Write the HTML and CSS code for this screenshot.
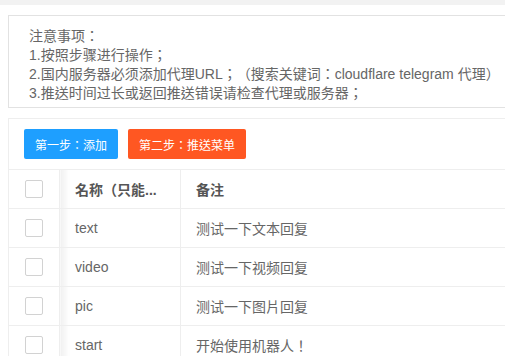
FILE: index.html
```html
<!DOCTYPE html>
<html lang="zh-CN">
<head>
    <meta charset="UTF-8">
    <meta name="viewport" content="width=device-width, initial-scale=1.0">
    <title>菜单管理</title>
    <link rel="stylesheet" href="styles.css">
</head>
<body>
    <div class="topbar"></div>

    <div class="notice">
        <div>注意事项：</div>
        <div>1.按照步骤进行操作；</div>
        <div>2.国内服务器必须添加代理URL；（搜索关键词：cloudflare telegram 代理）</div>
        <div>3.推送时间过长或返回推送错误请检查代理或服务器；</div>
    </div>

    <div class="table-view">
        <div class="toolbar">
            <button class="btn btn-blue">第一步：添加</button>
            <button class="btn btn-orange">第二步：推送菜单</button>
        </div>
        <table class="data-table">
            <thead>
                <tr>
                    <th class="col-check"><span class="checkbox"></span></th>
                    <th class="col-name">名称（只能...</th>
                    <th>备注</th>
                </tr>
            </thead>
            <tbody>
                <tr>
                    <td class="col-check"><span class="checkbox"></span></td>
                    <td class="col-name">text</td>
                    <td>测试一下文本回复</td>
                </tr>
                <tr>
                    <td class="col-check"><span class="checkbox"></span></td>
                    <td class="col-name">video</td>
                    <td>测试一下视频回复</td>
                </tr>
                <tr>
                    <td class="col-check"><span class="checkbox"></span></td>
                    <td class="col-name">pic</td>
                    <td>测试一下图片回复</td>
                </tr>
                <tr>
                    <td class="col-check"><span class="checkbox"></span></td>
                    <td class="col-name">start</td>
                    <td>开始使用机器人！</td>
                </tr>
            </tbody>
        </table>
    </div>
</body>
</html>
```

FILE: styles.css
```css
body {
    margin: 0;
    background: #fff;
    font-family: "Liberation Sans", "Noto Sans CJK TC", "Noto Sans CJK SC", sans-serif;
    font-feature-settings: "locl" 0;
    text-spacing-trim: space-all;
    font-size: 14px;
    color: #666;
    overflow: hidden;
}
.topbar {
    height: 5px;
    background: #f2f2f2;
}
.notice {
    margin: 10px 0 0 8px;
    width: 560px;
    border: 1px solid #e2e2e2;
    padding: 11px 20px 4px;
    line-height: 19px;
}
.table-view {
    margin: 10px 0 0 8px;
    width: 560px;
    border: 1px solid #eee;
    border-bottom: none;
}
.toolbar {
    display: flex;
    gap: 10px;
    padding: 10px 15px;
    border-bottom: 1px solid #eee;
}
.btn {
    height: 30px;
    padding: 0 11px;
    border: none;
    border-radius: 2px;
    color: #fff;
    font-family: inherit;
    font-feature-settings: inherit;
    font-size: 12px;
    cursor: pointer;
}
.btn-blue {
    background: #1e9fff;
}
.btn-orange {
    background: #ff5722;
}
.data-table {
    border-collapse: collapse;
    width: 100%;
    table-layout: fixed;
}
.data-table th,
.data-table td {
    height: 38px;
    padding: 0 15px;
    text-align: left;
    border-bottom: 1px solid #eee;
    border-left: 1px solid #eee;
    white-space: nowrap;
    overflow: hidden;
}
.data-table th {
    font-weight: bold;
    color: #555;
}
.data-table .col-check {
    width: 50px;
    padding: 0;
    border-left: none;
}
.data-table .col-name {
    width: 90px;
    background: linear-gradient(to right, rgba(0, 0, 0, 0.06), rgba(0, 0, 0, 0) 9px);
}
.checkbox {
    display: block;
    width: 16px;
    height: 16px;
    margin-left: 16px;
    border: 1px solid #d2d2d2;
    border-radius: 2px;
    background: #fff;
}
```
